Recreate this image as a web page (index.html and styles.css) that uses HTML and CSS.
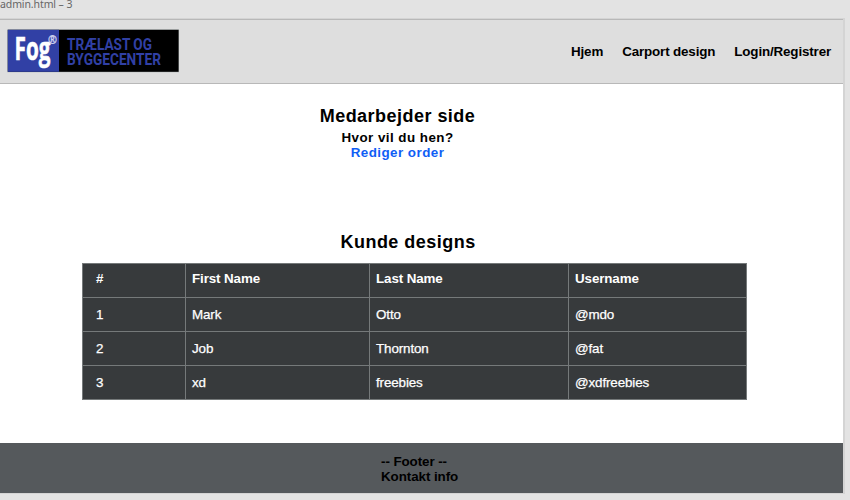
FILE: index.html
```
<!DOCTYPE html>
<html lang="da">
<head>
<meta charset="utf-8">
<title>admin.html</title>
<link rel="stylesheet" href="styles.css">
</head>
<body>
<div class="caption">admin.html – 3</div>
<div class="page">
  <header class="header">
    <svg class="logo" width="172" height="44" viewBox="0 0 172 44">
      <rect x=".3" y=".3" width="171.7" height="43" fill="#b4b8b8"/>
      <rect x=".8" y=".8" width="170.8" height="42" fill="#000"/>
      <rect x=".8" y=".8" width="51.2" height="42" fill="#3140a5"/>
      <g transform="translate(7.5 31) scale(1 1.43)"><text class="fog" textLength="36" lengthAdjust="spacingAndGlyphs">Fog</text></g>
      <text class="reg" x="41" y="15" textLength="9" lengthAdjust="spacingAndGlyphs">®</text>
      <text class="brand" x="60" y="21" textLength="85" lengthAdjust="spacingAndGlyphs">TRÆLAST OG</text>
      <text class="brand" x="60" y="36" textLength="94" lengthAdjust="spacingAndGlyphs">BYGGECENTER</text>
    </svg>
    <nav class="nav"><a>Hjem</a><a>Carport design</a><a>Login/Registrer</a></nav>
  </header>
  <main class="main">
    <section class="intro">
      <h1 class="title">Medarbejder side</h1>
      <p class="question">Hvor vil du hen?</p>
      <a class="link">Rediger order</a>
    </section>
    <h2 class="title designs">Kunde designs</h2>
    <table class="table">
      <colgroup><col class="c1"><col class="c2"><col class="c3"><col class="c4"></colgroup>
      <thead><tr><th>#</th><th>First Name</th><th>Last Name</th><th>Username</th></tr></thead>
      <tbody>
        <tr><td>1</td><td>Mark</td><td>Otto</td><td>@mdo</td></tr>
        <tr><td>2</td><td>Job</td><td>Thornton</td><td>@fat</td></tr>
        <tr><td>3</td><td>xd</td><td>freebies</td><td>@xdfreebies</td></tr>
      </tbody>
    </table>
  </main>
  <footer class="footer"><div>-- Footer --<br>Kontakt info</div></footer>
</div>
</body>
</html>
```
FILE: styles.css
```
* { box-sizing: border-box; }
body {
  margin: 0;
  height: 500px;
  overflow: hidden;
  background: #e3e3e3;
  font: 13.4px/15px "Liberation Sans", Arial, sans-serif;
  color: #000;
}
.caption {
  height: 15px;
  font: 10.5px/9px "Noto Sans", sans-serif;
  letter-spacing: -.1px;
  color: #666;
}
.page {
  width: 845px;
  height: 476px;
  margin-top: 3px;
  border: 1px solid #d4d4d4;
  border-width: 1px 2px 1px 0;
  background: #fff;
}
.header {
  height: 65px;
  display: flex;
  justify-content: space-between;
  align-items: flex-start;
  padding: 9px 12px 0 7px;
  background: #dedede;
  border-top: 1px solid #b8b8b8;
  border-bottom: 1px solid #b8b8b8;
}
.logo { display: block; }
.fog { font: bold 23px "Open Sans", sans-serif; fill: #fff; stroke: #fff; stroke-width: .4px; }
.reg { font: bold 12px "Open Sans", sans-serif; fill: #cdd1ee; stroke: #cdd1ee; stroke-width: .3px; }
.brand { font: bold 16.5px "Roboto", sans-serif; fill: #3140a5; }
.nav {
  display: flex;
  gap: 19px;
  padding-top: 15px;
  font-weight: bold;
  letter-spacing: -.15px;
}
.main { height: 359px; padding-top: 21px; }
.intro {
  width: 795px;
  height: 126px;
  text-align: center;
  font-weight: bold;
  letter-spacing: .45px;
}
.title {
  margin: 0;
  font-size: 18px;
  line-height: 23px;
  letter-spacing: .47px;
}
.question { margin: 2px 0 0; }
.link { display: block; color: #0f5ef5; }
.designs { padding-left: 340.5px; }
.table {
  width: 664px;
  height: 137px;
  margin: 9px 0 0 82px;
  table-layout: fixed;
  border-collapse: collapse;
  background: #373a3c;
  color: #fff;
}
.c1 { width: 103px; }
.c2 { width: 184px; }
.c3 { width: 199px; }
.c4 { width: 178px; }
.table th, .table td {
  height: 34px;
  padding: 0 6px 1px;
  border: 1px solid #75797a;
  text-align: left;
  letter-spacing: -.12px;
}
.table th:first-child, .table td:first-child { padding-left: 13px; }
.table th { padding-bottom: 4px; }
.table td { -webkit-text-stroke: .25px #fff; }
.footer {
  height: 50px;
  padding: 11px 0 0 381px;
  background: #55595c;
  font-weight: bold;
  letter-spacing: -.08px;
}
```
